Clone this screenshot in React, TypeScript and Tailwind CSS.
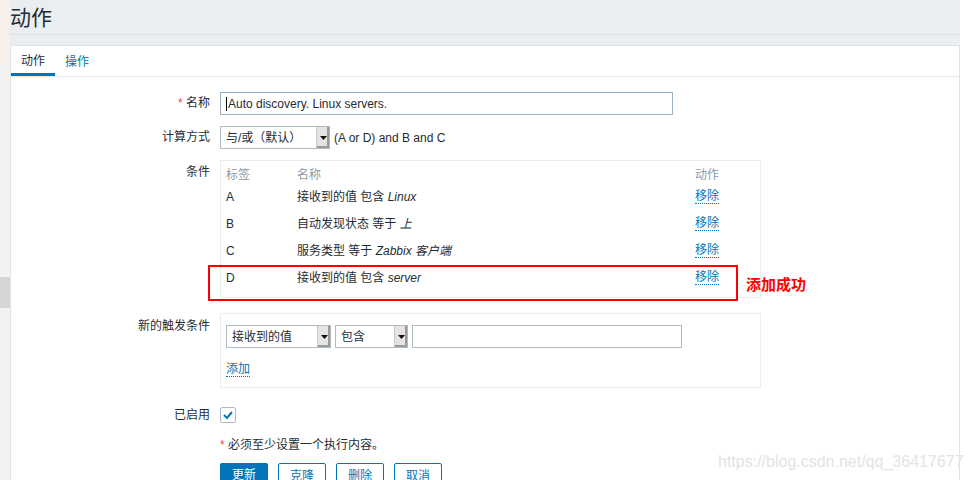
import React from 'react';

const font = { fontFamily: '"Liberation Sans", "Noto Sans CJK SC", sans-serif' };

const Select: React.FC<{ value: string; width: string }> = ({ value, width }) => (
  <div className={`flex h-[23px] ${width} items-stretch border border-[#acbbc4] bg-white`}>
    <span className="flex flex-1 items-center pl-[5px] text-[12px] text-[#1f2c33]">{value}</span>
    <span className="flex w-[13px] items-center justify-center border-l border-[#c8c8c8] bg-[#e4e4e4] shadow-[inset_-2px_-2px_0_#9a9a9a]">
      <svg width="7" height="4" viewBox="0 0 7 4">
        <path d="M0 0h7L3.5 4z" fill="#111" />
      </svg>
    </span>
  </div>
);

const Link: React.FC<{ children: React.ReactNode }> = ({ children }) => (
  <span className="border-b border-dotted border-[#0275b8] text-[12px] leading-[14px] text-[#0275b8]">{children}</span>
);

const Row: React.FC<{ label: React.ReactNode; lh?: string; children: React.ReactNode; className?: string }> = ({
  label,
  lh = 'leading-[23px]',
  children,
  className,
}) => (
  <div className={`flex ${className ?? ''}`}>
    <div className={`w-[209px] shrink-0 pr-[10px] text-right text-[12px] text-[#1f2c33] ${lh}`}>{label}</div>
    <div className="flex-1">{children}</div>
  </div>
);

const conditions = [
  { tag: 'A', text: '接收到的值 包含 ', val: 'Linux' },
  { tag: 'B', text: '自动发现状态 等于 ', val: '上' },
  { tag: 'C', text: '服务类型 等于 ', val: 'Zabbix 客户端' },
  { tag: 'D', text: '接收到的值 包含 ', val: 'server' },
];

export default function App() {
  return (
    <div className="relative flex h-[480px] w-[970px] overflow-hidden bg-white" style={font}>
      {/* faded left strip */}
      <div className="flex w-[10px] shrink-0 flex-col bg-[#f4f2f1]">
        <div className="h-[60px] bg-[#f7efe9]" />
        <div className="h-[217px]" />
        <div className="h-[31px] bg-[#d6d6d6]" />
      </div>

      <div className="flex w-[950px] shrink-0 flex-col bg-[#ebeef0]">
        {/* Title */}
        <div className="h-[35px] shrink-0 border-b border-[#dcdfe2]">
          <h1 className="pt-[4px] text-[21px] leading-[28px] text-[#1f2c33]">动作</h1>
        </div>

        {/* Panel */}
        <div className="mt-[10px] flex-1 border border-b-0 border-[#dfe4e7] bg-white">
          {/* Tabs */}
          <div className="flex h-[31px] border-b border-[#e6e6e6] text-[12px]">
            <div className="flex w-[44px] items-center justify-center border-b-[3px] border-[#0275b8] pt-[3px] text-[#1f2c33]">动作</div>
            <div className="flex items-center px-[10px] pt-[1px] text-[#0275b8]">操作</div>
          </div>

          <div className="pt-[15px]">
            <Row label={<><span className="text-[#e54b4b]">*</span> 名称</>}>
              <div className="flex h-[23px] w-[453px] items-center border border-[#98b2c2] pl-[5px] text-[12px] text-[#1f2c33]">
                <span className="mr-[1px] inline-block h-[14px] w-[1px] bg-black" />Auto discovery. Linux servers.
              </div>
            </Row>

            <Row label="计算方式" className="mt-[11px]">
              <div className="flex items-center gap-[4px]">
                <Select value="与/或（默认）" width="w-[110px]" />
                <span className="text-[12px] text-[#1f2c33]">(A or D) and B and C</span>
              </div>
            </Row>

            <Row label="条件" lh="leading-[16px] pt-[4px]" className="mt-[11px]">
              <div className="relative w-[541px] border border-[#ebeef0] px-[5px] pb-[6px] pt-[5px] text-[12px]">
                <div className="flex h-[17px] items-center text-[#8e9aa3]">
                  <span className="w-[71px]">标签</span>
                  <span className="w-[398px]">名称</span>
                  <span>动作</span>
                </div>
                {conditions.map((c) => (
                  <div key={c.tag} className="flex h-[27px] items-center text-[#1f2c33]">
                    <span className="w-[71px]">{c.tag}</span>
                    <span className="w-[398px]">
                      {c.text}
                      <i>{c.val}</i>
                    </span>
                    <Link>移除</Link>
                  </div>
                ))}
                {/* annotation */}
                <div className="absolute left-[-13px] top-[104px] h-[36px] w-[530px] border-2 border-[#ff0000]" />
                <div className="absolute left-[525px] top-[113px] whitespace-nowrap text-[15px] font-bold text-[#ff0000]">添加成功</div>
              </div>
            </Row>

            <Row label="新的触发条件" lh="leading-[16px] pt-[5px]" className="mt-[15px]">
              <div className="w-[541px] border border-[#ebeef0] px-[5px] pb-[10px] pt-[11px]">
                <div className="flex gap-[4px]">
                  <Select value="接收到的值" width="w-[105px]" />
                  <Select value="包含" width="w-[73px]" />
                  <div className="h-[23px] w-[270px] border border-[#acbbc4]" />
                </div>
                <div className="mt-[11px] leading-[18px]">
                  <Link>添加</Link>
                </div>
              </div>
            </Row>

            <Row label="已启用" lh="leading-[16px]" className="mt-[19px]">
              <div className="flex h-[16px] w-[16px] items-center justify-center rounded-[2px] border border-[#acbbc4]">
                <svg width="10" height="8" viewBox="0 0 10 8">
                  <path d="M1 4l3 3 5-6" fill="none" stroke="#0275b8" strokeWidth="2" />
                </svg>
              </div>
            </Row>

            <Row label="" lh="leading-[14px]" className="mt-[15px]">
              <div className="text-[12px] leading-[14px] text-[#1f2c33]">
                <span className="text-[#e54b4b]">*</span> 必须至少设置一个执行内容。
              </div>
            </Row>

            <Row label="" lh="leading-[14px]" className="mt-[11px]">
              <div className="flex gap-[10px] text-[12px]">
                <button className="h-[25px] w-[48px] rounded-[2px] bg-[#0275b8] leading-[25px] text-white">更新</button>
                <button className="h-[25px] w-[48px] rounded-[2px] border border-[#0275b8] bg-white text-[#0275b8]">克隆</button>
                <button className="h-[25px] w-[48px] rounded-[2px] border border-[#0275b8] bg-white text-[#0275b8]">删除</button>
                <button className="h-[25px] w-[48px] rounded-[2px] border border-[#0275b8] bg-white text-[#0275b8]">取消</button>
              </div>
            </Row>
          </div>
        </div>
      </div>

      <div className="w-[10px] shrink-0 bg-white" />

      {/* watermark */}
      <div className="pointer-events-none absolute left-[718px] top-[450px] text-[16px] text-[#e3e3e3]">
        https://blog.csdn.net/qq_36417677
      </div>
    </div>
  );
}
